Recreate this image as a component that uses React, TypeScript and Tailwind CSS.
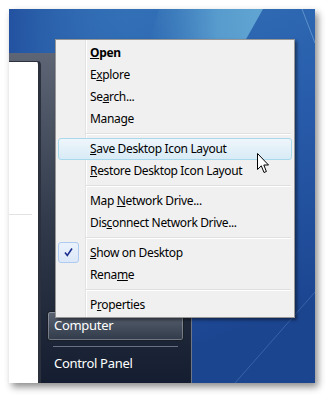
const font = { fontFamily: '"Noto Sans", "Open Sans", sans-serif' }

type Item =
  | { sep: true }
  | { sep?: false; label: React.ReactNode; hot?: boolean; checked?: boolean; bold?: boolean }

const u = (s: string) => <u className="underline underline-offset-[1px]">{s}</u>

const items: Item[] = [
  { label: <>{u('O')}pen</>, bold: true },
  { label: <>E{u('x')}plore</> },
  { label: <>Se{u('a')}rch...</> },
  { label: <>Mana{u('g')}e</> },
  { sep: true },
  { label: <>{u('S')}ave Desktop Icon Layout</>, hot: true },
  { label: <>{u('R')}estore Desktop Icon Layout</> },
  { sep: true },
  { label: <>Map {u('N')}etwork Drive...</> },
  { label: <>Dis{u('c')}onnect Network Drive...</> },
  { sep: true },
  { label: <>{u('S')}how on Desktop</>, checked: true },
  { label: <>Rena{u('m')}e</> },
  { sep: true },
  { label: <>P{u('r')}operties</> },
]

function Wallpaper() {
  return (
    <svg className="absolute inset-0" width="306" height="374" viewBox="0 0 306 374">
      <defs>
        <linearGradient id="bg" x1="0" y1="0" x2="0.3" y2="1">
          <stop offset="0" stopColor="#3474b8" />
          <stop offset="0.5" stopColor="#285cab" />
          <stop offset="1" stopColor="#1c4590" />
        </linearGradient>
        <linearGradient id="tl" x1="0" y1="0" x2="1" y2="0">
          <stop offset="0" stopColor="#2352a0" />
          <stop offset="1" stopColor="#3a7cbf" stopOpacity="0" />
        </linearGradient>
        <linearGradient id="streak" x1="0" y1="0" x2="1" y2="0">
          <stop offset="0" stopColor="#5aa0d0" stopOpacity="0" />
          <stop offset="0.6" stopColor="#62a8d4" stopOpacity="0.8" />
          <stop offset="1" stopColor="#66acd6" stopOpacity="0.9" />
        </linearGradient>
      </defs>
      <rect width="306" height="374" fill="url(#bg)" />
      <rect width="160" height="60" fill="url(#tl)" />
      <polygon points="150,0 254,0 236,32 140,32" fill="url(#streak)" />
      <line x1="293" y1="0" x2="306" y2="34" stroke="#9cc8ea" strokeOpacity="0.45" strokeWidth="1" />
      <line x1="306" y1="283" x2="226" y2="374" stroke="#6f9ad6" strokeOpacity="0.35" strokeWidth="1" />
    </svg>
  )
}

function StartMenu() {
  return (
    <div className="relative flex h-full w-[183px] flex-col bg-gradient-to-b from-[#5e6676] via-[#323b4b] to-[#141e30] pt-[8px] border-r border-[#6f7785]" style={font}>
      <div className="flex flex-1">
        <div className="flex w-[32px] flex-col rounded-tr-[4px] border-r-[3px] border-t border-[#2b313c] bg-white">
          <div className="mt-[152px] mr-[6px] h-px bg-[#e3e3e3]" />
        </div>
        <div className="flex flex-1 flex-col justify-end pb-[6px] pl-[6px] pr-[7px]">
          <div className="flex h-[30px] items-center rounded-[3px] border border-[#1a1f28] bg-gradient-to-b from-[#5b6473] to-[#323b4a] pl-[6px] text-[13px] tracking-[-0.3px] text-white shadow-[inset_0_0_0_1px_rgba(255,255,255,0.3)]">
            Computer
          </div>
          <div className="mx-[6px] mt-[5px] h-px bg-[#6a7281]" />
          <div className="mt-[4px] flex h-[26px] items-center pl-[7px] text-[13px] tracking-[-0.3px] text-white">Control Panel</div>
        </div>
      </div>
    </div>
  )
}

function ContextMenu() {
  return (
    <div
      className="absolute left-[46px] top-[30px] w-[240px] border border-[#979797] bg-[#f0f0f0] pt-[2px] pb-[1px] shadow-[2px_2px_3px_rgba(0,0,0,0.45)]"
      style={font}
    >
      <div className="absolute left-[29px] top-0 bottom-0 w-px bg-[#e2e3e3]" />
      <div className="absolute left-[30px] top-0 bottom-0 w-px bg-white" />
      {items.map((it, i) =>
        it.sep ? (
          <div key={i} className="relative flex h-[8px] items-center pl-[30px] pr-[3px]">
            <div className="w-full border-t border-b border-t-[#e0e0e0] border-b-white" />
          </div>
        ) : (
          <div
            key={i}
            className={
              'relative mx-[2px] flex h-[22px] items-center rounded-[3px] border pl-[31px] text-[12px] tracking-[-0.35px] text-black ' +
              (it.hot
                ? 'border-[#a8d8eb] bg-gradient-to-b from-[#eef6fb] to-[#d8ebf6]'
                : 'border-transparent')
            }
          >
            {it.checked && (
              <div className="absolute left-[-1px] top-[-1px] flex h-[21px] w-[21px] items-center justify-center rounded-[3px] border border-[#aecaf0] bg-gradient-to-b from-[#eaf2fc] to-[#dce8f8]">
                <svg width="11" height="11" viewBox="0 0 11 11">
                  <path d="M2 5.5 L4.3 8.5 L9 1.5" fill="none" stroke="#1c2f8f" strokeWidth="1.6" />
                </svg>
              </div>
            )}
            <span className={it.bold ? 'font-bold' : ''}>{it.label}</span>
          </div>
        )
      )}
    </div>
  )
}

function Cursor() {
  return (
    <svg className="absolute left-[248px] top-[144px]" width="13" height="21" viewBox="0 0 13 21">
      <path d="M0.5 0.5 L0.5 16.5 L4.3 12.8 L7 19.5 L9.4 18.5 L6.8 12 L11.5 12 Z" fill="white" stroke="black" strokeWidth="1" strokeLinejoin="miter" />
    </svg>
  )
}

export default function App() {
  return (
    <div className="h-[397px] w-[329px] bg-white p-[9px]">
      <div className="relative h-[374px] w-[306px] overflow-hidden shadow-[3px_4px_7px_rgba(0,0,0,0.45)]">
        <Wallpaper />
        <div className="relative flex h-full flex-col pt-[44px]">
          <StartMenu />
        </div>
        <ContextMenu />
        <Cursor />
      </div>
    </div>
  )
}
